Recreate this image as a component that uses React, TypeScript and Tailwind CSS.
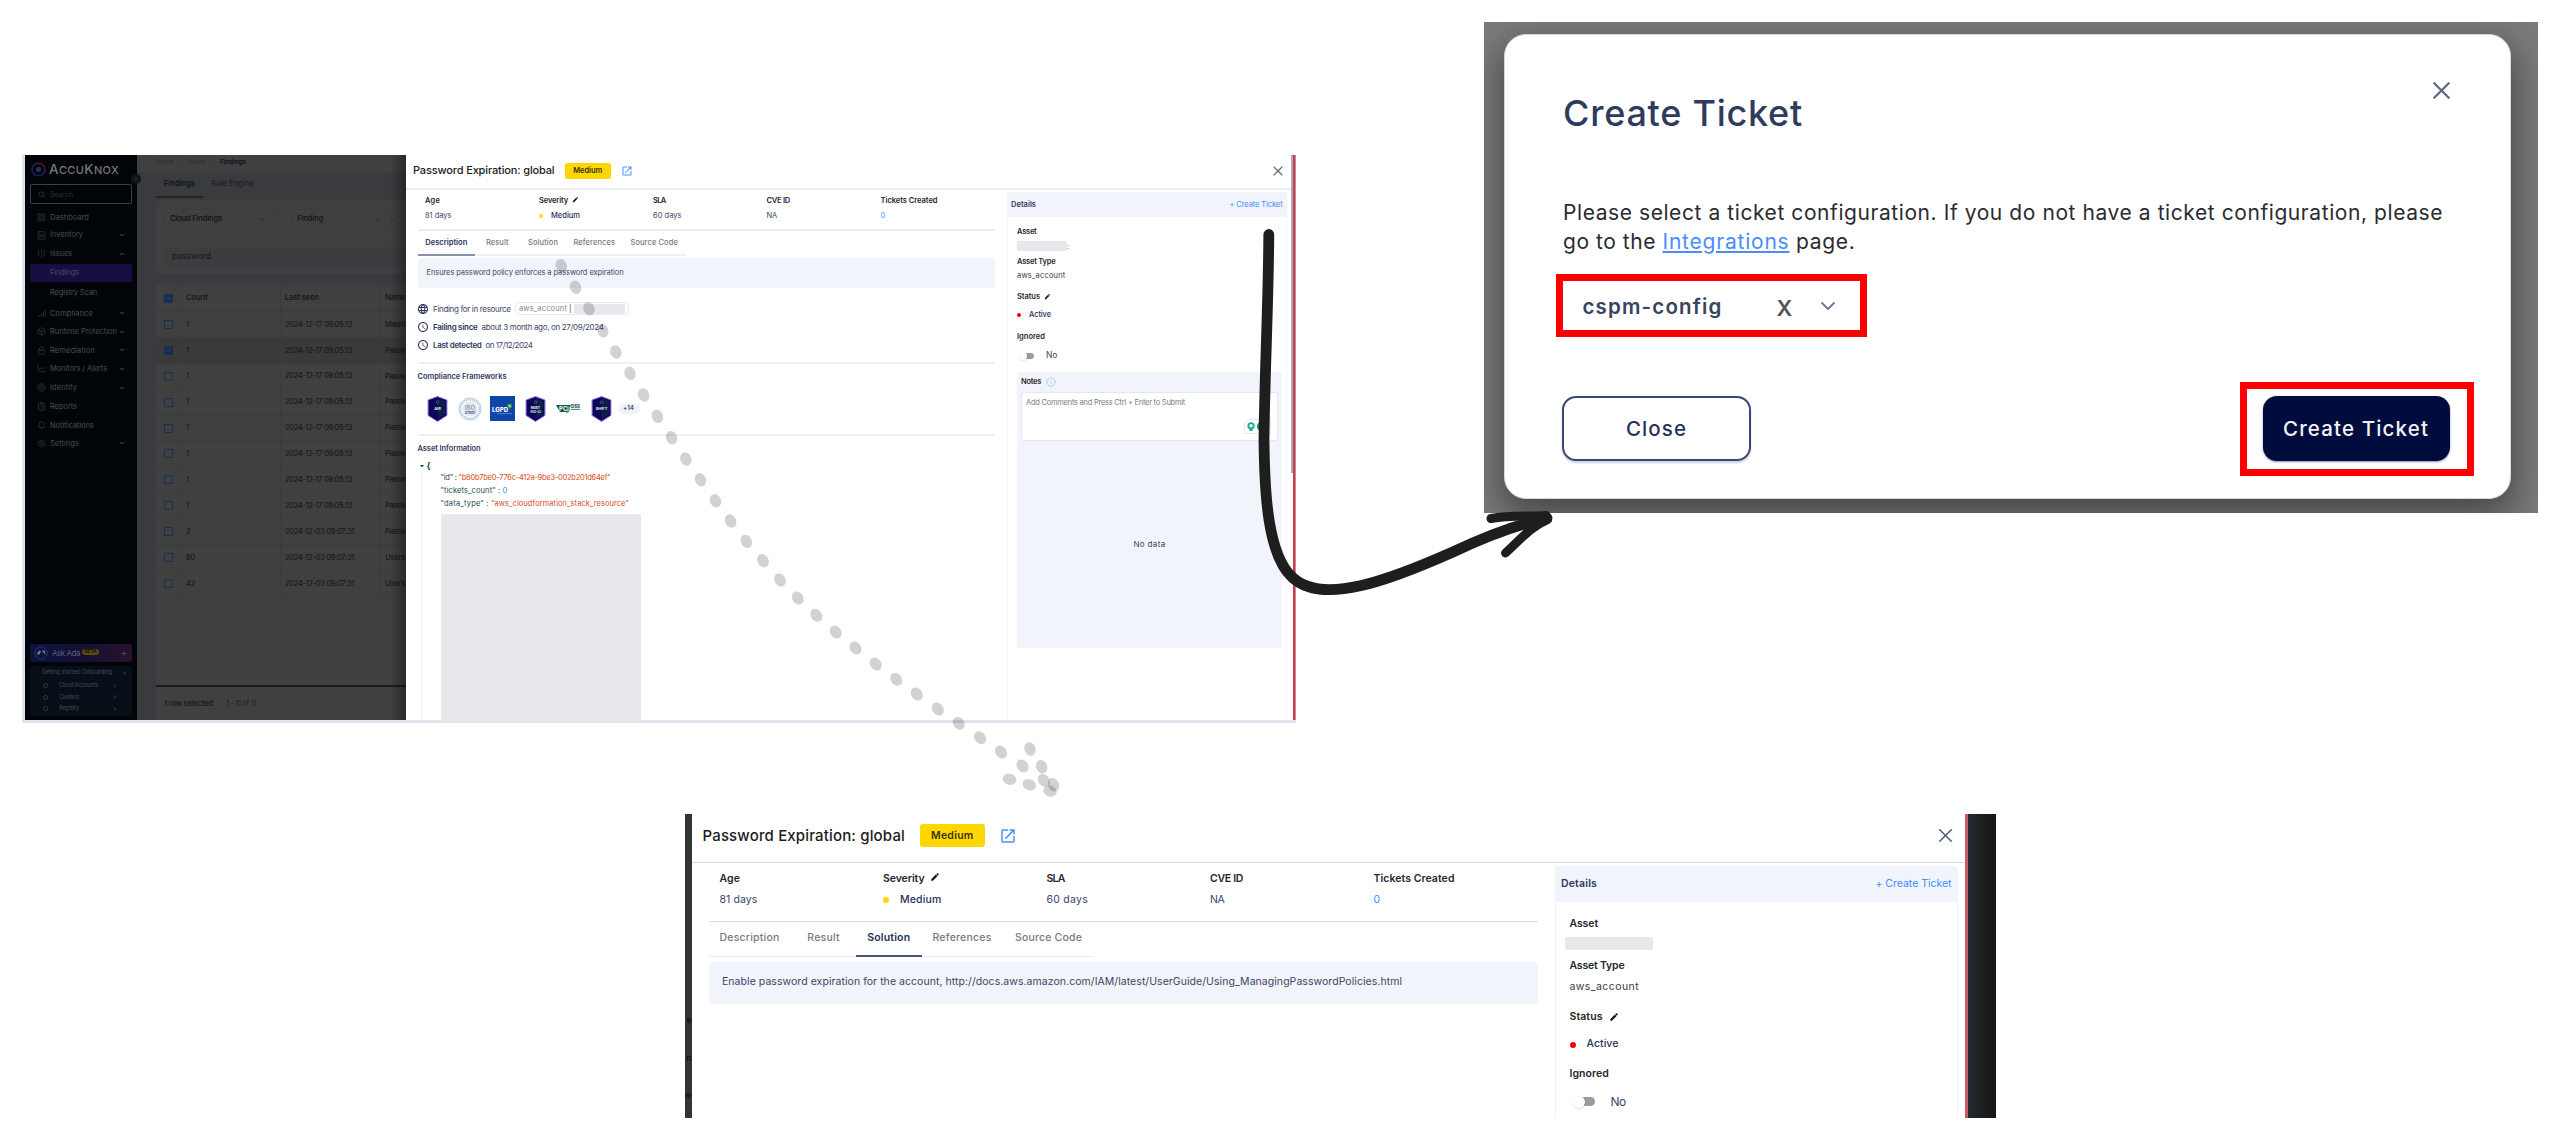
import React, { useLayoutEffect, useRef, useState } from "react";
import {
  Bell, Box, Check, ChevronDown, ChevronLeft, ChevronRight, ChevronUp, ChartLine, ClipboardList, Fingerprint,
  LayoutGrid, Lock, Search, Settings, ShieldAlert, Signal, X, ArrowRight, Server, Info, Minus,
} from "lucide-react";
import { MdEdit, MdLanguage, MdOpenInNew, MdAccessTime } from "react-icons/md";

/** One line of text whose tracking is adjusted so that it spans `w` pixels. */
function T({ w, className = "", children }: { w: number; className?: string; children: React.ReactNode }) {
  const ref = useRef<HTMLSpanElement>(null);
  const [ls, setLs] = useState(0);
  useLayoutEffect(() => {
    const el = ref.current;
    if (!el) return;
    const n = (el.textContent ?? "").length;
    if (n) setLs((w - el.getBoundingClientRect().width) / n);
  }, [w]);
  return (
    <span ref={ref} className={"inline-block shrink-0 whitespace-pre leading-none " + className} style={{ letterSpacing: ls }}>
      {children}
    </span>
  );
}

type NavItem = { label: string; w: number; h: string; icon: React.ReactNode; caret?: "up" | "down" };
const ic = "size-[9px] text-[#34363b]";
const navTop: NavItem[] = [
  { label: "Dashboard", w: 39, h: "h-[17px]", icon: <LayoutGrid className={ic} /> },
  { label: "Inventory", w: 33, h: "h-[18px]", icon: <Server className={ic} />, caret: "down" },
  { label: "Issues", w: 22, h: "h-[19px]", icon: <ShieldAlert className={ic} />, caret: "up" },
];
const navBottom: NavItem[] = [
  { label: "Compliance", w: 43, h: "h-[18.5px]", icon: <Signal className={ic} />, caret: "down" },
  { label: "Runtime Protection", w: 67, h: "h-[18.6px]", icon: <Box className={ic} />, caret: "down" },
  { label: "Remediation", w: 45, h: "h-[18.6px]", icon: <Lock className={ic} />, caret: "down" },
  { label: "Monitors / Alerts", w: 57, h: "h-[18.6px]", icon: <ChartLine className={ic} />, caret: "down" },
  { label: "Identity", w: 27, h: "h-[19px]", icon: <Fingerprint className={ic} />, caret: "down" },
  { label: "Reports", w: 27, h: "h-[19px]", icon: <ClipboardList className={ic} /> },
  { label: "Notifications", w: 44, h: "h-[18px]", icon: <Bell className={ic} /> },
  { label: "Settings", w: 29, h: "h-[18px]", icon: <Settings className={ic} />, caret: "down" },
];

function NavRow({ item }: { item: NavItem }) {
  return (
    <div className={"flex items-center pl-[7px] pr-[7px] " + item.h}>
      {item.icon}
      <T w={item.w} className="ml-[4px] text-[7.5px] text-[#4b4d51]">{item.label}</T>
      <span className="ml-auto">
        {item.caret === "down" && <ChevronDown strokeWidth={4} className="size-[6px] text-[#55585d]" />}
        {item.caret === "up" && <ChevronUp strokeWidth={4} className="size-[6px] text-[#55585d]" />}
      </span>
    </div>
  );
}

function Sidebar() {
  return (
    <aside className="flex h-full w-[112px] flex-col bg-[#010409] px-[5px]">
      <div className="flex h-[29px] items-center pl-px">
        <svg viewBox="0 0 16 16" className="size-[15px]">
          <path d="M5 1.6h6l3.7 4" fill="none" stroke="#5c1524" strokeWidth="1.8" />
          <path d="M14.7 5.6v5L11 14.4" fill="none" stroke="#401a4a" strokeWidth="1.8" />
          <path d="M11 14.4H5L1.3 10.6v-5L5 1.6" fill="none" stroke="#12225c" strokeWidth="1.8" />
          <circle cx="8" cy="8" r="2.8" fill="#25305f" />
        </svg>
        <T w={70} className="ml-[3px] text-[11px] font-medium text-[#77797c]">
          <span className="text-[13.5px]">A</span>CCU<span className="text-[13.5px]">K</span>NOX
        </T>
      </div>
      <div className="flex h-[20px] items-center rounded-[2px] border border-[#3d4044] pl-[7px]">
        <Search className="size-[7px] text-[#44474b]" />
        <T w={23} className="ml-[5px] text-[7px] text-[#2d3035]">Search</T>
      </div>
      <nav className="mt-[5px] flex flex-col">
        {navTop.map((i) => <NavRow key={i.label} item={i} />)}
        <div className="mt-px flex h-[18px] items-center rounded-[2px] bg-[#160d40] pl-[20px]"><T w={29} className="text-[7.5px] text-[#4f4b62]">Findings</T></div>
        <div className="flex h-[22px] items-center pl-[20px]"><T w={47} className="text-[7.5px] text-[#4b4d51]">Registry Scan</T></div>
        {navBottom.map((i) => <NavRow key={i.label} item={i} />)}
      </nav>
      <div className="mt-auto flex h-[18px] items-center rounded-[3px] bg-gradient-to-r from-[#0a1440] via-[#140f35] to-[#2b112c] pl-[4px] pr-[5px]">
        <svg viewBox="0 0 16 16" className="size-[14px]">
          <circle cx="8" cy="8" r="7" fill="none" stroke="#2c3c72" />
          <path d="M3 9l3-4 2 1-2 4zM9 5l3 0 1 5-2-2z" fill="#7b7f8c" />
        </svg>
        <T w={28} className="ml-[4px] text-[8px] text-[#5c5f72]">Ask Ada</T>
        <span className="mb-[3px] ml-[2px] flex h-[6px] w-[17px] items-center justify-center rounded-full bg-[#5c4c0a]"><T w={12} className="text-[5px] font-bold text-[#17150a]">BETA</T></span>
        <ArrowRight className="ml-auto size-[7px] text-[#6a6675]" />
      </div>
      <div className="mb-[4px] mt-[4px] flex h-[50px] flex-col rounded-[3px] bg-[#070e18]">
        <div className="flex h-[14px] items-center pl-[12px] pr-[5px]">
          <T w={70} className="text-[5.5px] text-[#454b54]">Getting started: Onboarding</T>
          <X className="ml-auto size-[5px] text-[#565c64]" />
        </div>
        {[["Cloud Accounts", 39], ["Clusters", 20], ["Registry", 20]].map(([l, w]) => (
          <div key={l} className="flex h-[11.5px] items-center pl-[13px] pr-[14px]">
            <span className="flex size-[5px] items-center justify-center rounded-full border border-[#1d4a2c]" />
            <T w={w as number} className="ml-[11px] text-[5.5px] text-[#454b54]">{l}</T>
            <ChevronRight className="ml-auto size-[6px] text-[#676c74]" />
          </div>
        ))}
      </div>
    </aside>
  );
}

const rows = [
  ["1", "2024-12-17 09:05:13", "Maxim"], ["1", "2024-12-17 09:05:13", "Passw"], ["1", "2024-12-17 09:05:13", "Passw"],
  ["1", "2024-12-17 09:05:13", "Passw"], ["1", "2024-12-17 09:05:13", "Passw"], ["1", "2024-12-17 09:05:13", "Passw"],
  ["1", "2024-12-17 09:05:13", "Passw"], ["1", "2024-12-17 09:05:13", "Passw"], ["2", "2024-12-03 09:07:31", "Passw"],
  ["60", "2024-12-03 09:07:31", "Users"], ["42", "2024-12-03 09:07:31", "Users"],
];

function FindingsPage() {
  const cell = "flex h-full items-center border-r border-[#393b3e]";
  return (
    <section className="flex h-full w-[269px] flex-col overflow-hidden bg-[#393b3e]">
      <div className="flex h-[17px] items-start bg-[#404040] pl-[19px] pt-[4px] text-[6.5px] text-[#2c2d2e]">
        <T w={18}>Home</T>
        <ChevronRight className="ml-[4px] size-[7px]" />
        <T w={18} className="ml-[3px]">Issues</T>
        <ChevronRight className="ml-[4px] size-[7px]" />
        <T w={26} className="ml-[3px] font-semibold text-[#0b131e]">Findings</T>
      </div>
      <div className="flex h-[26px] pl-[19px]">
        <div className="flex w-[47px] items-center justify-center border-b-2 border-[#222529]"><T w={31} className="text-[7.5px] font-semibold text-[#0e1119]">Findings</T></div>
        <div className="flex items-center pb-[2px] pl-[8px]"><T w={43} className="text-[7.5px] font-medium text-[#1e1f20]">Rule Engine</T></div>
      </div>
      <div className="ml-[19px] mt-[2px] h-[74px] rounded-[4px] bg-[#404040] pl-[8px] pt-[9px]">
        <div className="flex gap-[12px]">
          <div className="flex h-[20px] w-[119px] items-center rounded-[3px] border border-[#3a3c3f] pl-[5px] pr-[13px]">
            <T w={52} className="text-[7.5px] font-semibold text-[#151618]">Cloud Findings</T>
            <ChevronDown className="ml-auto size-[7px] text-[#1c1d1f]" />
          </div>
          <div className="flex h-[20px] w-[119px] items-center rounded-[3px] border border-[#3a3c3f] pl-[5px]">
            <T w={26} className="text-[7.5px] font-semibold text-[#151618]">Finding</T>
            <X className="ml-[51px] size-[7px] text-[#27292b]" />
            <ChevronDown className="ml-[8px] size-[7px] text-[#1c1d1f]" />
          </div>
        </div>
        <div className="mt-[18px] flex h-[19px] items-center rounded-l-[3px] bg-[#3b3d40] pl-[8px]"><T w={39} className="text-[8.5px] text-[#17181a]">password</T></div>
      </div>
      <div className="ml-[19px] mt-[10px] flex grow flex-col bg-[#404040] text-[7.5px] text-[#131313]">
        <div className="flex h-[28px] items-center border-y border-[#393b3e]">
          <div className={cell + " w-[26px] pl-[8px]"}><span className="flex size-[9px] items-center justify-center rounded-[1px] bg-[#142e56]"><Minus strokeWidth={3} className="size-[7px] text-[#434951]" /></span></div>
          <div className={cell + " w-[99px] pl-[4px]"}><T w={22} className="font-medium">Count</T></div>
          <div className={cell + " w-[100px] pl-[4px]"}><T w={34} className="font-medium">Last seen</T></div>
          <div className="pl-[4px]"><T w={20} className="font-medium">Name</T></div>
        </div>
        {rows.map((r, i) => (
          <div key={i} className={"flex h-[25.9px] items-center border-b border-[#393b3e] " + (i === 1 ? "bg-[#3a3a3b]" : "")}>
            <div className={cell + " w-[26px] pl-[8px]"}>
              {i === 1
                ? <span className="flex size-[9px] items-center justify-center rounded-[1px] bg-[#142e56]"><Check strokeWidth={3} className="size-[7px] text-[#434951]" /></span>
                : <span className="size-[9px] rounded-[1px] border border-[#152f58]" />}
            </div>
            <div className={cell + " w-[99px] pl-[4px]"}><T w={i < 8 ? 3 : i === 8 ? 4 : 9}>{r[0]}</T></div>
            <div className={cell + " w-[100px] pl-[4px]"}><T w={i < 8 ? 67 : 69}>{r[1]}</T></div>
            <div className="pl-[4px]"><T w={20}>{r[2]}</T></div>
          </div>
        ))}
        <div className="mt-auto flex h-[35px] items-center border-t-2 border-[#171c28] pl-[8px]">
          <T w={49} className="font-medium text-[#161616]">1 row selected</T>
          <T w={30} className="ml-[13px] text-[#1f1f1f]">1 - 11 of 11</T>
        </div>
      </div>
    </section>
  );
}

function Shield({ lines }: { lines: string[] }) {
  return (
    <svg viewBox="0 0 20 26" className="h-[26px] w-[21px]">
      <path d="M10 .6L19.4 4v15.4L10 25.4.6 19.4V4z" fill="#0b0757" stroke="#8a63e8" strokeWidth="1" />
      <path d="M10 2l7.6 3v13.6L10 23.8z" fill="#0c1e4a" />
      <circle cx="10" cy="6.2" r="1.3" fill="none" stroke="#6d74a0" strokeWidth=".6" />
      {lines.map((l, i) => (
        <text key={l} x="10" y={14.2 + i * 3.6 - (lines.length - 1)} fontSize={i ? 2.8 : 4} textAnchor="middle" fill="#e7e9f5" fontFamily="Inter, sans-serif" fontWeight="700">{l}</text>
      ))}
    </svg>
  );
}

function ComplianceLogos() {
  return (
    <div className="mt-[6px] flex h-[25px] items-center pl-[9.5px]">
      <Shield lines={["AIR"]} />
      <svg viewBox="0 0 24 24" className="ml-[10px] size-[24px]">
        <circle cx="12" cy="12" r="11" fill="#fff" stroke="#b7c9dc" strokeWidth="1" />
        <circle cx="12" cy="12" r="9.4" fill="none" stroke="#a9c0d6" strokeWidth="1.6" strokeDasharray="1.2 .8" />
        <circle cx="12" cy="12" r="7.4" fill="#e3e8ec" />
        <text x="12" y="13.2" fontSize="6" textAnchor="middle" fill="#8d9aa6" fontFamily="Inter, sans-serif" fontWeight="600">ISO</text>
        <text x="12" y="17" fontSize="3.4" textAnchor="middle" fill="#2c5f94" fontFamily="Inter, sans-serif" fontWeight="800">27001</text>
      </svg>
      <svg viewBox="0 0 25 25" className="ml-[8px] h-[25px] w-[25px]">
        <rect width="25" height="25" fill="#0f45ab" />
        <text x="2" y="16" fontSize="6" fill="#fff" fontFamily="Inter, sans-serif" fontWeight="800">LGPD</text>
        <path d="M17 9l3-1.5 2.2 2-1 2.6-2.6.3z" fill="#3fae49" /><path d="M18.6 9.500l1.6-.4.4 1.6-1.6.4z" fill="#f2d43a" />
        <path d="M7 17.6h15" stroke="#6e93d6" strokeWidth=".7" />
      </svg>
      <span className="ml-[10px] flex"><Shield lines={["NIST", "800-53"]} /></span>
      <svg viewBox="0 0 25 14" className="ml-[10px] h-[14px] w-[25px]">
        <path d="M0 3h15l-4 7H4z" fill="#17554d" />
        <text x="3" y="8.7" fontSize="6" fill="#fff" fontFamily="Inter, sans-serif" fontWeight="700">PCI</text>
        <path d="M12 4q3 4-1.6 7" fill="none" stroke="#35b34a" strokeWidth="1.4" />
        <text x="15" y="5.6" fontSize="4.4" fill="#17554d" fontFamily="Inter, sans-serif" fontWeight="800">DSS</text>
        <path d="M15 7.4h9" stroke="#17554d" strokeWidth=".8" />
      </svg>
      <span className="ml-[9.5px] flex"><Shield lines={["SHIFT"]} /></span>
      <span className="ml-[6px] flex h-[10px] w-[22px] items-center justify-center rounded-full bg-[#f0f2f7]"><T w={11} className="text-[6.5px] font-medium text-[#2e3650]">+14</T></span>
    </div>
  );
}

const lbl = "text-[7.5px] font-semibold text-[#26262c]";
const val = "text-[7.5px] text-[#3b4466]";

function DescriptionDrawer() {
  return (
    <div className="flex h-full w-[885px] flex-col bg-white">
      <div className="flex h-[35px] items-center border-b-2 border-[#ededee] pb-[2px] pl-[7px] pr-[7px]">
        <T w={141.5} className="text-[11px] font-medium text-[#1c1c22]">Password Expiration: global</T>
        <span className="ml-[10.5px] flex h-[16px] w-[45.5px] items-center justify-center rounded-[2px] bg-[#ffd700]"><T w={29} className="text-[7.5px] font-semibold text-[#3a3205]">Medium</T></span>
        <MdOpenInNew className="ml-[10px] size-[12px] text-[#4a90ff]" />
        <X strokeWidth={1.6} className="-mr-[2px] ml-auto size-[16px] text-[#5b6580]" />
      </div>
      <div className="flex grow">
        <div className="ml-[11.5px] flex w-[577px] flex-col">
          <div className="grid h-[21px] grid-cols-[114px_114px_113.5px_114px_1fr] items-center pl-[7.5px]">
            <T w={15} className={lbl + " justify-self-start"}>Age</T>
            <div className="flex items-center"><T w={29} className={lbl}>Severity</T><MdEdit className="mb-[2px] ml-[4px] size-[7px] text-[#111]" /></div>
            <T w={12.5} className={lbl + " justify-self-start"}>SLA</T>
            <T w={23.5} className={lbl + " justify-self-start"}>CVE ID</T>
            <T w={57} className={lbl + " justify-self-start"}>Tickets Created</T>
          </div>
          <div className="grid h-[9px] grid-cols-[114px_114px_113.5px_114px_1fr] items-center pl-[7.5px]">
            <T w={26.5} className={val + " justify-self-start"}>81 days</T>
            <div className="flex items-center"><span className="size-[4px] rounded-full bg-[#ffd700]" /><T w={29} className="ml-[8px] text-[7.5px] font-medium text-[#27305a]">Medium</T></div>
            <T w={28.5} className={val + " justify-self-start"}>60 days</T>
            <T w={10.5} className={val + " justify-self-start"}>NA</T>
            <T w={5} className="justify-self-start text-[7.5px] text-[#3f8cff]">0</T>
          </div>
          <div className="mt-[9px] border-t-2 border-[#eeeeef]" />
          <div className="flex h-[25px] text-[7.5px] font-medium text-[#77787e]">
            <div className="flex w-[57.5px] items-center justify-center border-b-2 border-[#8791ab]"><T w={42} className="font-semibold text-[#27305a]">Description</T></div>
            <div className="flex w-[44.6px] items-center justify-center border-b-2 border-[#eef1f7]"><T w={22.5}>Result</T></div>
            <div className="flex w-[46.8px] items-center justify-center border-b-2 border-[#eef1f7]"><T w={30}>Solution</T></div>
            <div className="flex w-[55.8px] items-center justify-center border-b-2 border-[#eef1f7]"><T w={41.5}>References</T></div>
            <div className="flex w-[64px] items-center justify-center border-b-2 border-[#eef1f7]"><T w={47.5}>Source Code</T></div>
          </div>
          <div className="mt-[2px] flex h-[30px] items-center rounded-[3px] bg-[#f1f4fa] pl-[9px]"><T w={197} className="text-[7.5px] text-[#3d4668]">Ensures password policy enforces a password expiration</T></div>
          <div className="mt-[11.5px] flex h-[18px] items-center">
            <MdLanguage className="-ml-px size-[12px] text-[#2b3558]" />
            <T w={77.5} className="ml-[4.5px] text-[8px] text-[#3d4668]">Finding for in resource</T>
            <span className="ml-[4px] flex h-[13px] w-[114px] items-center rounded-[4px] border border-[#e2ecfb] pl-[3.5px]">
              <T w={48} className="text-[7.5px] text-[#85868c]">aws_account</T>
              <T w={3} className="ml-[2px] text-[7.5px] text-[#33333a]">|</T>
              <span className="ml-[1.5px] h-[10px] w-[51px] rounded-[1px] bg-[#e8e7ec]" />
            </span>
          </div>
          <div className="flex h-[18px] items-center">
            <MdAccessTime className="-ml-px size-[12px] text-[#2b3558]" />
            <T w={44.5} className="ml-[4.5px] text-[8px] font-semibold text-[#2f395c]">Failing since</T>
            <T w={122} className="ml-[4px] text-[8px] text-[#3d4668]">about 3 month ago, on 27/09/2024</T>
          </div>
          <div className="flex h-[18px] items-center">
            <MdAccessTime className="-ml-px size-[12px] text-[#2b3558]" />
            <T w={48.5} className="ml-[4.5px] text-[8px] font-semibold text-[#2f395c]">Last detected</T>
            <T w={47} className="ml-[4px] text-[8px] text-[#3d4668]">on 17/12/2024</T>
          </div>
          <div className="mt-[8.5px] border-t-2 border-[#f0f0f1]" />
          <div className="flex h-[26px] items-center"><T w={89} className="text-[7.5px] font-semibold text-[#2f395c]">Compliance Frameworks</T></div>
          <ComplianceLogos />
          <div className="mt-[13px] border-t-2 border-[#f0f0f1]" />
          <div className="flex h-[25px] items-center"><T w={63} className="text-[7.5px] font-semibold text-[#2f395c]">Asset Information</T></div>
          <div className="flex h-[10px] items-center gap-[3px] pl-[2px]">
            <svg viewBox="0 0 4 3" className="h-[3px] w-[4px]"><path d="M0 0h4L2 2.6z" fill="#17474d" /></svg>
            <T w={4} className="text-[8.5px] font-bold text-[#17474d]">{"{"}</T>
          </div>
          <div className="ml-[3px] flex grow flex-col border-l border-[#ededed] pl-[19px] text-[7.5px] text-[#1d4a50]">
            <div className="flex h-[13px] items-center"><T w={18}>"id" : </T><T w={152} className="text-[#d84a1b]">"b80b7be0-776c-412a-9be3-002b201d64ef"</T></div>
            <div className="flex h-[13px] items-center"><T w={62}>"tickets_count" : </T><T w={5} className="text-[#2b95ef]">0</T></div>
            <div className="flex h-[13px] items-center"><T w={50.5}>"data_type" : </T><T w={138} className="text-[#d84a1b]">"aws_cloudformation_stack_resource"</T></div>
            <div className="-mb-[2px] mt-[3.5px] w-[200px] grow rounded-t-[1px] bg-[#e8e7ec]" />
          </div>
        </div>
        <div className="ml-[12px] mt-[1.5px] flex w-[280px] flex-col border-x border-[#f5f6f9]">
          <div className="-mx-px flex h-[25.5px] items-center justify-between rounded-t-[3px] bg-[#f1f4fa] pl-[4.5px] pr-[4px]">
            <T w={25} className="text-[7.5px] font-semibold text-[#2f395c]">Details</T>
            <T w={53} className="text-[7.5px] text-[#3f8cff]">+ Create Ticket</T>
          </div>
          <div className="flex grow flex-col items-start pl-[9.5px]">
            <div className="mt-[7px] flex h-[15px] items-center"><T w={19.5} className={lbl}>Asset</T></div>
            <div className="flex h-[14px] items-center"><span className="h-[10.5px] w-[50px] rounded-[2px] bg-[#e8e7ec]" /><T w={2} className="text-[7px] text-[#666]">:</T></div>
            <div className="flex h-[17px] items-center"><T w={38.5} className={lbl}>Asset Type</T></div>
            <div className="flex h-[11px] items-center"><T w={48.5} className="text-[7.5px] text-[#3c3c42]">aws_account</T></div>
            <div className="mt-[9px] flex h-[13px] items-center"><T w={23} className={lbl}>Status</T><MdEdit className="mb-px ml-[4px] size-[7px] text-[#111]" /></div>
            <div className="mt-[5px] flex h-[14px] items-center"><span className="size-[4px] rounded-full bg-[#f00]" /><T w={22} className="ml-[8px] text-[7.5px] font-medium text-[#27305a]">Active</T></div>
            <div className="mt-[8px] flex h-[14px] items-center"><T w={28} className={lbl}>Ignored</T></div>
            <div className="mt-[4px] flex h-[15px] items-center pl-[3px]">
              <span className="flex h-[6px] w-[14px] items-center rounded-full bg-[#9b9b9b]"><span className="-ml-px size-[8px] rounded-full bg-white shadow-sm" /></span>
              <T w={11} className="ml-[12px] text-[8.5px] text-[#3b4466]">No</T>
            </div>
            <div className="mt-[9px] flex h-[276px] w-[265px] flex-col rounded-[3px] bg-[#f1f4fa] px-[4px]">
              <div className="flex h-[20px] items-center"><T w={20} className={lbl}>Notes</T><Info strokeWidth={1.6} className="ml-[5px] size-[10px] text-[#8fbcf8]" /></div>
              <div className="flex h-[49px] flex-col items-start rounded-[3px] border border-[#e4e7ec] bg-white pl-[4px] pt-[6px]">
                <T w={159} className="text-[7.5px] text-[#7b7b80]">Add Comments and Press Ctrl + Enter to Submit</T>
                <div className="mb-[6px] ml-auto mr-[6px] mt-auto flex h-[15px] w-[27px] items-center gap-[2px] rounded-tl-[6px] border border-[#e6e8ee] pl-[2px]">
                  <svg viewBox="0 0 8 10" className="h-[10px] w-[8px]"><circle cx="4" cy="3.8" r="2.7" fill="none" stroke="#10ac92" strokeWidth="1.9" /><path d="M2.6 6h2.8v3H2.6z" fill="#10ac92" /></svg>
                  <span className="size-[9px] rounded-full bg-[#118a6f]" />
                </div>
              </div>
              <div className="flex grow items-center justify-center pb-[2px] pt-px"><T w={32} className="text-[8px] text-[#3b4466]">No data</T></div>
            </div>
          </div>
        </div>
      </div>
    </div>
  );
}

function DashboardShot() {
  return (
    <div className="absolute left-[22px] top-[155px] flex h-[568px] w-[1274px] flex-col border-b-[3px] border-l-[3px] border-[#dde3ed]">
      <div className="relative flex h-[565px]">
        <Sidebar />
        <span className="absolute left-[106px] top-[19px] flex size-[10px] items-center justify-center rounded-full bg-[#111315]"><ChevronLeft className="size-[6px] text-[#55585c]" /></span>
        <FindingsPage />
        <span className="absolute left-[365px] top-0 h-full w-[16px] bg-gradient-to-r from-transparent to-black/35" />
        <DescriptionDrawer />
        <div className="h-full w-[2px]"><div className="h-[318px] w-full bg-[#a3abc2]" /></div>
        <div className="h-full w-[3px] border-r border-[#d9848c] bg-[#c4424f]" />
      </div>
    </div>
  );
}

const blbl = "text-[10.5px] font-semibold text-[#26262c]";
const bval = "text-[10.5px] text-[#3b4466]";

function SolutionShot() {
  return (
    <div className="absolute left-[685px] top-[813.5px] flex h-[304px] w-[1311px] overflow-hidden">
      <div className="flex w-[6.5px] flex-col items-end overflow-hidden bg-[#333435] text-[9px] leading-none text-[#0c0c0c]">
        <span className="mt-[201px]">e</span><span className="mt-[29px]">n</span><span className="mt-[28px]">w</span>
      </div>
      <div className="flex w-[1273px] flex-col bg-white">
        <div className="flex h-[49px] shrink-0 items-center border-b border-[#dcdddf] pb-[4px] pl-[11px] pr-[10px]">
          <T w={202.5} className="text-[15px] font-medium text-[#1c1c22]">Password Expiration: global</T>
          <span className="ml-[14.5px] flex h-[23px] w-[65.5px] items-center justify-center rounded-[3px] bg-[#ffd700] pt-px"><T w={42.5} className="text-[10.5px] font-semibold text-[#3a3205]">Medium</T></span>
          <MdOpenInNew className="ml-[14px] size-[18px] text-[#4a90ff]" />
          <X strokeWidth={1.4} className="-mr-[2px] ml-auto size-[23px] text-[#4c5672]" />
        </div>
        <div className="flex grow">
          <div className="ml-[17px] flex w-[829px] flex-col">
            <div className="mt-[6px] grid h-[21px] grid-cols-[163.5px_163.5px_163.5px_163.5px_1fr] items-center pl-[11px]">
              <T w={20.5} className={blbl + " justify-self-start"}>Age</T>
              <div className="flex items-center"><T w={41.5} className={blbl}>Severity</T><MdEdit className="mb-[4px] ml-[5px] size-[10px] text-[#111]" /></div>
              <T w={18} className={blbl + " justify-self-start"}>SLA</T>
              <T w={33} className={blbl + " justify-self-start"}>CVE ID</T>
              <T w={81} className={blbl + " justify-self-start"}>Tickets Created</T>
            </div>
            <div className="grid h-[21px] grid-cols-[163.5px_163.5px_163.5px_163.5px_1fr] items-center pl-[11px]">
              <T w={38} className={bval + " justify-self-start"}>81 days</T>
              <div className="flex items-center"><span className="size-[6px] rounded-full bg-[#ffd700]" /><T w={41.5} className="ml-[11px] text-[10.5px] font-medium text-[#27305a]">Medium</T></div>
              <T w={41.5} className={bval + " justify-self-start"}>60 days</T>
              <T w={14.5} className={bval + " justify-self-start"}>NA</T>
              <T w={6.5} className="justify-self-start text-[10.5px] text-[#3f8cff]">0</T>
            </div>
            <div className="mt-[10px] border-t border-[#dcdddf]" />
            <div className="flex h-[35px] text-[10.5px] font-medium text-[#77787e]">
              <div className="flex w-[82px] items-center justify-center border-b border-[#e6eaf2]"><T w={60}>Description</T></div>
              <div className="flex w-[65px] items-center justify-center border-b border-[#e6eaf2] pl-px"><T w={32.5}>Result</T></div>
              <div className="flex w-[66.5px] items-center justify-center border-b-2 border-[#4a5578]"><T w={43} className="font-semibold text-[#27305a]">Solution</T></div>
              <div className="flex w-[80px] items-center justify-center border-b border-[#e6eaf2]"><T w={59}>References</T></div>
              <div className="flex w-[91px] items-center justify-center border-b border-[#e6eaf2] pl-[2px]"><T w={67}>Source Code</T></div>
            </div>
            <div className="mt-[5px] flex h-[42px] items-center rounded-[5px] bg-[#f1f4fa] pl-[13.5px]">
              <T w={680} className="text-[10.5px] text-[#3d4668]">Enable password expiration for the account, http://docs.aws.amazon.com/IAM/latest/UserGuide/Using_ManagingPasswordPolicies.html</T>
            </div>
          </div>
          <div className="ml-[17.5px] mt-[3px] flex w-[402.5px] flex-col border-x border-[#eff1f6]">
            <div className="-mx-px flex h-[36px] shrink-0 items-center justify-between rounded-t-[4px] bg-[#f1f4fa] pl-[6px] pr-[6px] pt-px">
              <T w={36} className="text-[10.5px] font-semibold text-[#2f395c]">Details</T>
              <T w={76} className="text-[10.5px] text-[#3f8cff]">+ Create Ticket</T>
            </div>
            <div className="flex flex-col items-start pl-[13.5px]">
              <div className="mt-[12px] flex h-[21px] items-center"><T w={28.5} className={blbl}>Asset</T></div>
              <div className="-ml-[5px] mt-[2px] h-[13.5px] w-[88px] rounded-[2px] bg-[#e8e7ec]" />
              <div className="mt-[6px] flex h-[21px] items-center"><T w={55} className={blbl}>Asset Type</T></div>
              <div className="flex h-[20px] items-center"><T w={69.5} className="text-[10.5px] text-[#3c3c42]">aws_account</T></div>
              <div className="mt-[10px] flex h-[21px] items-center"><T w={33} className={blbl}>Status</T><MdEdit className="mb-[2px] ml-[6px] size-[10px] text-[#111]" /></div>
              <div className="mt-[6px] flex h-[21px] items-center"><span className="size-[6px] rounded-full bg-[#f00]" /><T w={32} className="ml-[11px] text-[10.5px] font-medium text-[#27305a]">Active</T></div>
              <div className="mt-[9px] flex h-[21px] items-center"><T w={39.5} className={blbl}>Ignored</T></div>
              <div className="mt-[6px] flex h-[21px] items-center pl-[4px]">
                <span className="flex h-[9px] w-[21px] items-center rounded-full bg-[#9b9b9b]"><span className="-ml-px size-[12px] rounded-full bg-white shadow-sm" /></span>
                <T w={15} className="ml-[16px] text-[12px] text-[#3b4466]">No</T>
              </div>
            </div>
          </div>
        </div>
      </div>
      <div className="w-[3.5px] bg-[#c95c66]" />
      <div className="grow bg-gradient-to-r from-[#252a31] to-[#181818] to-75%" />
    </div>
  );
}

function CreateTicketShot() {
  return (
    <div className="absolute left-[1483.5px] top-[22px] h-[491px] w-[1054.5px] overflow-hidden bg-[#7a7a7a] pl-[20.5px] pt-[11.5px]">
      <div className="flex h-[465px] w-[1007px] flex-col rounded-[22px] border border-[#d8d8d8] bg-white pl-[58px] pr-[60px] shadow-[0_14px_34px_4px_rgba(0,0,0,0.4)]">
        <div className="flex h-[160px] items-start justify-between">
          <T w={240} className="mt-[60px] text-[36px] font-medium text-[#2f3b5c]">Create Ticket</T>
          <X strokeWidth={1.9} className="-mr-[6px] mt-[41px] size-[29px] text-[#5f6982]" />
        </div>
        <div className="flex h-[29px] items-center pt-[6px]"><T w={880} className="text-[21px] text-[#2b2b2f]">Please select a ticket configuration. If you do not have a ticket configuration, please</T></div>
        <div className="flex h-[29px] items-center pt-[6px] text-[21px] text-[#2b2b2f]">
          <T w={99.5}>go to the </T><T w={127} className="text-[#4a8cff] underline underline-offset-2">Integrations</T><T w={66}> page.</T>
        </div>
        <div className="-ml-[7px] mt-[21px] flex h-[63px] w-[311px] items-center border-[7px] border-[#fe0000] pb-[1px] pl-[19.5px] pr-[20px] pt-[6px]">
          <T w={140} className="text-[20.5px] font-semibold text-[#37435f]">cspm-config</T>
          <T w={14} className="ml-[54px] text-[22px] font-semibold text-[#555]">X</T>
          <ChevronDown strokeWidth={1.8} className="mb-[4px] ml-auto size-[24px] text-[#6d7690]" />
        </div>
        <div className="mt-[45px] flex h-[94px] items-center justify-between">
          <button className="-ml-px flex h-[65px] w-[189px] items-center justify-center rounded-[14px] border-2 border-[#3b4677] pt-[2px] shadow-[0_2px_2px_rgba(20,30,80,0.2)]"><T w={61} className="text-[20.5px] font-medium text-[#27335a]">Close</T></button>
          <div className="-mr-[24px] flex h-[94px] w-[234px] items-center border-[7px] border-[#fe0000] pl-[15.5px]">
            <button className="flex h-[65px] w-[187px] items-center justify-center rounded-[14px] bg-[#010c3e] pt-[2px] shadow-[0_1px_2px_rgba(20,30,80,0.5)]"><T w={146} className="text-[20.5px] font-medium text-[#f1f2f6]">Create Ticket</T></button>
          </div>
        </div>
      </div>
    </div>
  );
}

const dots: [number, number, number][] = [
  [561.3, 265.7, -22], [575.6, 287.3, -22], [589, 308.7, -22], [602.8, 330.7, -22], [615.9, 352, -22], [630, 373.3, -22],
  [643.6, 395, -22], [657.4, 416.3, -22], [671.6, 437.7, -22], [685.9, 459, -22], [700.5, 479.7, -24], [715.5, 500.7, -24],
  [730.6, 521, -26], [746.4, 541.3, -28], [763, 560.7, -28], [780, 580, -30], [797.8, 598, -32], [816.4, 615.3, -34],
  [835.7, 632, -36], [855.5, 648, -36], [875.7, 664, -38], [896.2, 679.3, -38], [916.8, 694, -38], [937.8, 709, -38],
  [958.7, 723.3, -38], [980, 737.7, -38], [1001, 752, -38], [1022.5, 766, -38], [1043.9, 780.3, -38],
  [1030, 749, -22], [1041.6, 766.7, -22], [1053.5, 784.7, -22], [1009.5, 779.3, -75], [1029.4, 784.7, -65], [1050, 791, -70],
];

function Arrows() {
  return (
    <svg viewBox="0 0 2560 1139" className="pointer-events-none absolute left-0 top-0 h-[1139px] w-[2560px]">
      {dots.map(([x, y, r], i) => (
        <ellipse key={i} cx={x} cy={y} rx="5.5" ry="6.9" transform={`rotate(${r} ${x} ${y})`} fill="#1e1e1e" fillOpacity=".2" />
      ))}
      <g fill="none" stroke="#1e1e1e" strokeLinecap="round" strokeLinejoin="round">
        <path d="M1268.8 234.5C1268.5 300 1264.5 380 1264 440C1264.5 495 1268 555 1292 577C1322 606 1390 580 1454 551.500C1485 537 1515 525 1547 518" strokeWidth="10.8" />
        <path d="M1491 518.5C1510 515.5 1530 516.5 1546 515.5L1547.5 519.5C1530 527 1520 540 1505.500 553" strokeWidth="9" />
        <path d="M1522 521L1540 518L1526 529Z" strokeWidth="5" fill="#1e1e1e" />
      </g>
    </svg>
  );
}

export default function App() {
  return (
    <main className="relative h-[1139px] w-[2560px] overflow-hidden bg-white font-[Inter,sans-serif]">
      <DashboardShot />
      <CreateTicketShot />
      <SolutionShot />
      <Arrows />
    </main>
  );
}
